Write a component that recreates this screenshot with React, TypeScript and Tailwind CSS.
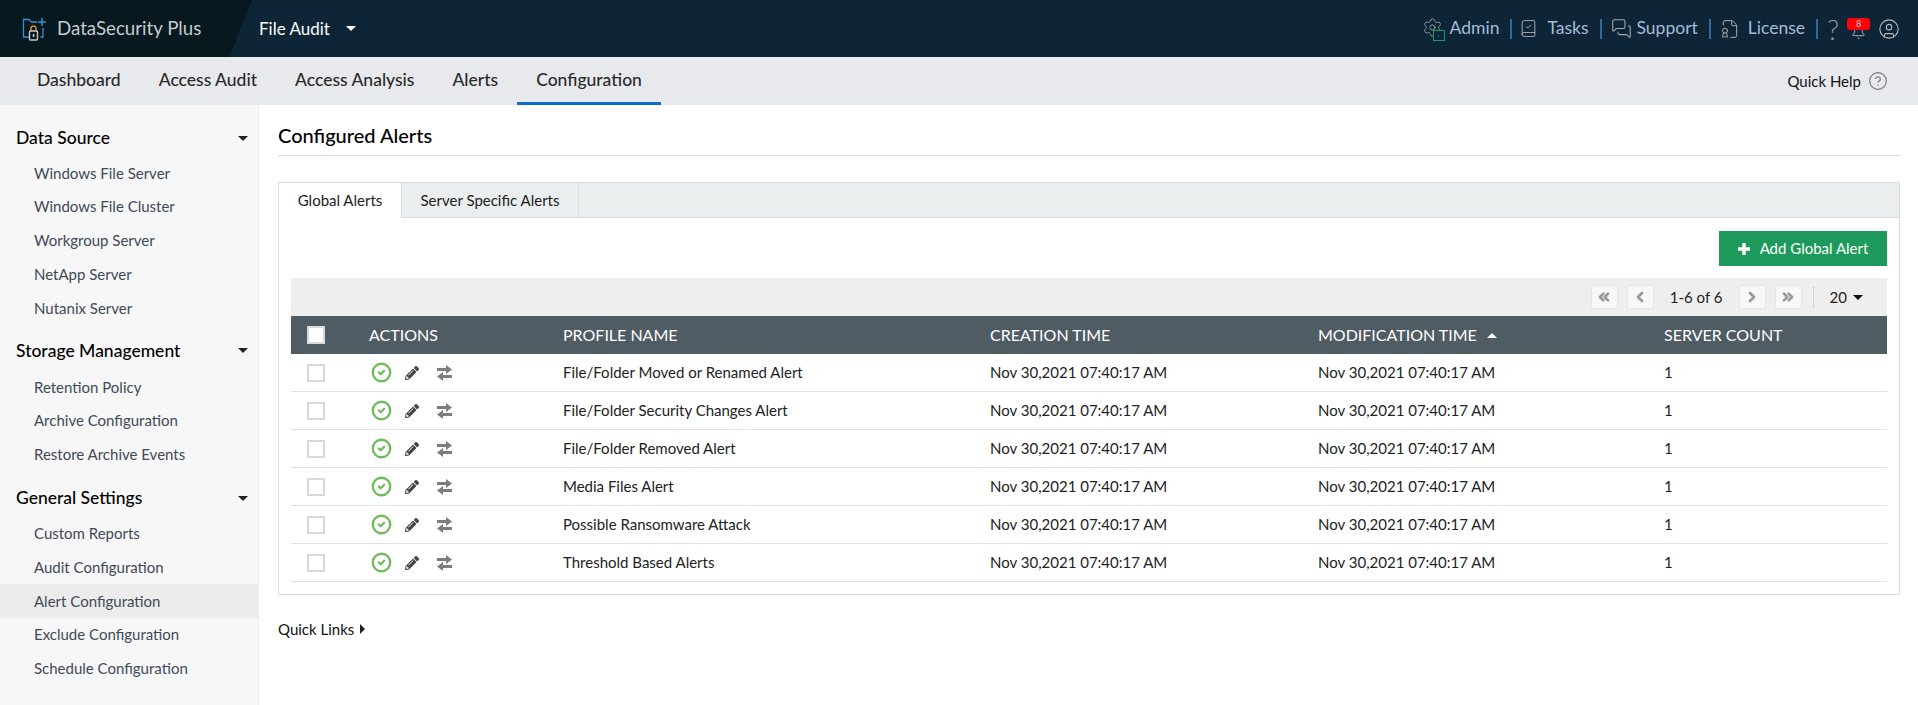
import React from "react";
import {
  Bell,
  BookCheck,
  ChevronLeft,
  ChevronRight,
  ChevronsLeft,
  ChevronsRight,
  CircleCheck,
  CircleHelp,
  CircleUser,
  FileBadge,
  MessagesSquare,
  Settings,
} from "lucide-react";
import { FaPencilAlt } from "react-icons/fa";

const sections = [
  {
    title: "Data Source",
    head: "h-[36px]",
    gap: "mb-[7px]",
    items: ["Windows File Server", "Windows File Cluster", "Workgroup Server", "NetApp Server", "Nutanix Server"],
  },
  {
    title: "Storage Management",
    head: "h-[38px]",
    gap: "mb-[9px]",
    items: ["Retention Policy", "Archive Configuration", "Restore Archive Events"],
  },
  {
    title: "General Settings",
    head: "h-[36px]",
    gap: "mb-0",
    items: ["Custom Reports", "Audit Configuration", "Alert Configuration", "Exclude Configuration", "Schedule Configuration"],
  },
];

const profiles = [
  "File/Folder Moved or Renamed Alert",
  "File/Folder Security Changes Alert",
  "File/Folder Removed Alert",
  "Media Files Alert",
  "Possible Ransomware Attack",
  "Threshold Based Alerts",
];

const topLinks = ["Dashboard", "Access Audit", "Access Analysis", "Alerts", "Configuration"];

const Caret = ({ className }: { className: string }) => (
  <span className={"inline-block h-0 w-0 border-x-[5px] border-t-[5px] border-x-transparent " + className} />
);

const Separator = ({ first }: { first?: boolean }) => (
  <span className={"ml-[11px] h-[20px] w-[2px] bg-[#2a6d9c] " + (first ? "mr-[7px]" : "mr-[9px]")} />
);

const Header = () => (
  <header className="flex h-[57px] items-center bg-[#0e2537]">
    {/* logo part with the slanted edge */}
    <div className="flex h-full w-[252px] items-center bg-[#07181f] pl-[22px] [clip-path:polygon(0_0,100%_0,91%_100%,0_100%)]">
      <svg width="24" height="24" viewBox="0 0 24 24" fill="none" className="text-[#3a8fd0]">
        <path d="M7 20H1.5V2.5H7L9.5 5H15" stroke="currentColor" strokeWidth="1.3" />
        <path d="M21 11v9h-2.5" stroke="currentColor" strokeWidth="1.3" />
        <path d="M20 1v8M16 5h8" stroke="currentColor" strokeWidth="1.5" />
        <path d="M9 14v-2.5a2.5 2.5 0 0 1 5 0V14" stroke="#d8893a" strokeWidth="1.4" />
        <rect x="7.5" y="14" width="8" height="9" rx="1" stroke="#c8c8c8" strokeWidth="1.4" />
        <rect x="10.8" y="17" width="1.6" height="3" fill="#c8c8c8" />
      </svg>
      <span className="ml-[11px] text-[18.7px] text-[#c4ccd2]">DataSecurity Plus</span>
    </div>
    <span className="ml-[7px] text-[17px] text-white">File Audit</span>
    <Caret className="ml-[16px] border-t-white" />

    <div className="ml-auto flex items-center pr-[18px] text-[17.5px] text-[#a3bcd8]">
      <span className="relative mr-[5px] h-[24px] w-[23px]">
        <Settings size={21} strokeWidth={1} className="text-[#9aa5ad]" />
        <span className="absolute bottom-0 right-0 flex h-[11px] w-[12px] items-center justify-center border border-[#1d9a5b] bg-[#0e2537] text-[7px] leading-none text-[#1d9a5b]">
          ›
        </span>
      </span>
      <span>Admin</span>
      <Separator first />
      <BookCheck size={19} strokeWidth={1.2} className="mr-[9px] text-[#a6adb3]" />
      <span>Tasks</span>
      <Separator />
      <MessagesSquare size={21} strokeWidth={1.2} className="mr-[5px] text-[#a6adb3]" />
      <span>Support</span>
      <Separator />
      <FileBadge size={20} strokeWidth={1.2} className="mr-[8px] text-[#a6adb3]" />
      <span>License</span>
      <Separator />
      <span className="w-[7px] text-[28px] font-light leading-none text-[#8f9aa3]">?</span>
      <span className="relative ml-[13px] mr-[8px] h-[22px] w-[23px]">
        <Bell size={15} strokeWidth={1.4} className="absolute bottom-0 left-[4px] text-[#b4bcc2]" />
        <span className="absolute left-0 top-0 h-[12px] w-[23px] rounded-[3px] bg-[#fb0207] text-center text-[9px] leading-[12px] text-[#f5c8c8]">
          8
        </span>
      </span>
      <CircleUser size={22} strokeWidth={1.2} className="text-[#b4bcc2]" />
    </div>
  </header>
);

const NavBar = () => (
  <nav className="flex h-[48px] items-stretch bg-[#e8e9ed] pl-[18px]">
    {topLinks.map((link) => (
      <div
        key={link}
        className={
          "flex items-center border-b-[3px] px-[19px] pt-[1px] text-[17.5px] font-medium text-[#2a2a2a] " +
          (link === "Configuration" ? "border-[#0d6bcb]" : "border-transparent")
        }
      >
        {link}
      </div>
    ))}
    <div className="ml-auto flex items-center gap-[7px] pr-[30px] text-[15px] text-[#111]">
      <span>Quick Help</span>
      <CircleHelp size={20} strokeWidth={1.4} className="text-[#777]" />
    </div>
  </nav>
);

const Sidebar = () => (
  <aside className="w-[259px] shrink-0 border-r border-[#eeeeee] bg-[#f7f7f7] pt-[15px]">
    {sections.map((section) => (
      <div key={section.title} className={section.gap}>
        <div className={"flex items-center justify-between pl-[16px] pr-[10px] text-[17.5px] font-medium text-black " + section.head}>
          <span>{section.title}</span>
          <Caret className="border-t-[#222]" />
        </div>
        {section.items.map((item) => (
          <div
            key={item}
            className={
              "flex h-[33.8px] items-center pl-[34px] text-[15px] text-[#3f4a58] " +
              (item === "Alert Configuration" ? "bg-[#ececec]" : "")
            }
          >
            {item}
          </div>
        ))}
      </div>
    ))}
  </aside>
);

const PageButton = ({ children }: { children: React.ReactNode }) => (
  <span className="flex h-[24px] w-[27px] items-center justify-center border border-[#e6e6e6] bg-[#f7f7f7] text-[#999999]">
    {children}
  </span>
);

const Checkbox = () => <span className="block h-[18px] w-[18px] border-2 border-[#d6dadc] bg-white" />;

// chunky two way arrows of the actions column
const SwapIcon = () => (
  <svg width="15" height="16" viewBox="0 0 15 16" className="ml-[18px] text-[#7d7d7d]" fill="currentColor">
    <path d="M0 3h9V0l6 4.5L9 9V6H0z" />
    <path d="M15 10H6V7l-6 4.5L6 16v-3h9z" />
  </svg>
);

const gridCols = "grid grid-cols-[78px_194px_427px_328px_346px_1fr] items-center";

const AlertsPanel = () => (
  <div className="mt-[26px] border border-[#d9dddf] pb-[12px]">
    {/* tabs */}
    <div className="flex h-[35px] bg-[#ebeeef] text-[15px] text-[#222]">
      <div className="flex w-[123px] items-center justify-center border-r border-[#d9dddf] bg-white">Global Alerts</div>
      <div className="flex w-[177px] items-center justify-center border-b border-r border-[#d9dddf]">Server Specific Alerts</div>
      <div className="flex-1 border-b border-[#d9dddf]" />
    </div>

    <div className="px-[12px]">
      <div className="flex justify-end pt-[13px]">
        <button className="flex h-[35px] w-[168px] items-center justify-center gap-[10px] bg-[#1d9a5b] text-[15px] text-white">
          <svg width="12" height="12" viewBox="0 0 12 12" fill="currentColor">
            <path d="M4.3 0h3.4v4.3H12v3.4H7.7V12H4.3V7.7H0V4.3h4.3z" />
          </svg>
          Add Global Alert
        </button>
      </div>

      {/* pagination */}
      <div className="mt-[12px] flex h-[38px] items-center justify-end bg-[#eeeeee] pr-[24px] text-[15px] text-[#222]">
        <div className="flex items-center gap-[9px]">
          <PageButton>
            <ChevronsLeft size={16} strokeWidth={4} />
          </PageButton>
          <PageButton>
            <ChevronLeft size={16} strokeWidth={4} />
          </PageButton>
        </div>
        <span className="w-[85px] text-center">1-6 of 6</span>
        <div className="flex items-center gap-[9px]">
          <PageButton>
            <ChevronRight size={16} strokeWidth={4} />
          </PageButton>
          <PageButton>
            <ChevronsRight size={16} strokeWidth={4} />
          </PageButton>
        </div>
        <span className="ml-[11px] mr-[16px] h-[21px] border-l border-dotted border-[#bbb]" />
        <span>20</span>
        <Caret className="ml-[6px] border-t-[#111]" />
      </div>

      {/* table head */}
      <div className={gridCols + " h-[38px] bg-[#4f5c64] text-[16px] text-white"}>
        <div className="pl-[16px]">
          <Checkbox />
        </div>
        <div>ACTIONS</div>
        <div>PROFILE NAME</div>
        <div>CREATION TIME</div>
        <div className="flex items-center gap-[10px]">
          MODIFICATION TIME
          <span className="h-0 w-0 border-x-[5px] border-b-[5px] border-x-transparent border-b-white" />
        </div>
        <div>SERVER COUNT</div>
      </div>

      {profiles.map((name) => (
        <div key={name} className={gridCols + " h-[38px] border-b border-[#dfe2e4] text-[15px] text-[#222]"}>
          <div className="pl-[16px]">
            <Checkbox />
          </div>
          <div className="flex items-center pl-[2px]">
            <CircleCheck size={21} strokeWidth={2.6} className="text-[#6fba5b]" />
            <FaPencilAlt size={14} className="ml-[13px] text-[#444]" />
            <SwapIcon />
          </div>
          <div>{name}</div>
          <div>Nov 30,2021 07:40:17 AM</div>
          <div>Nov 30,2021 07:40:17 AM</div>
          <div>1</div>
        </div>
      ))}
    </div>
  </div>
);

const App = () => {
  return (
    <div className="flex h-[705px] flex-col overflow-hidden bg-white font-['Lato',sans-serif]">
      <Header />
      <NavBar />
      <div className="flex flex-1">
        <Sidebar />
        <main className="flex-1 pl-[19px] pr-[18px] pt-[18px]">
          <h1 className="border-b border-[#dddddd] pb-[7px] text-[20px] font-medium leading-[25px] text-black">
            Configured Alerts
          </h1>
          <AlertsPanel />
          <div className="mt-[23px] flex items-center gap-[6px] text-[15px] text-[#111]">
            Quick Links
            <span className="h-0 w-0 border-y-[5px] border-l-[5px] border-y-transparent border-l-[#222]" />
          </div>
        </main>
      </div>
    </div>
  );
};

export default App;
